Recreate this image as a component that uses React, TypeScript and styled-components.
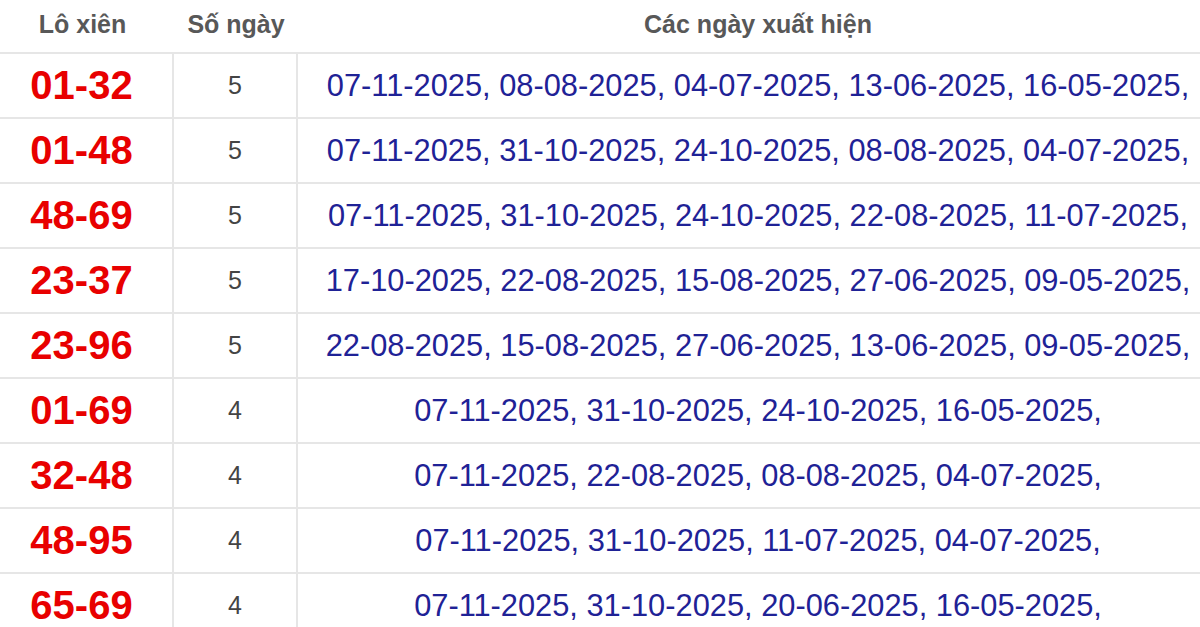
import React from 'react';
import styled, { createGlobalStyle } from 'styled-components';

const GlobalStyle = createGlobalStyle`
  html, body {
    margin: 0;
    padding: 0;
    background: #fff;
    overflow: hidden;
  }
  body {
    font-family: 'Liberation Sans', Arial, sans-serif;
  }
`;

const rows = [
  { pair: '01-32', count: 5, dates: ['07-11-2025', '08-08-2025', '04-07-2025', '13-06-2025', '16-05-2025'] },
  { pair: '01-48', count: 5, dates: ['07-11-2025', '31-10-2025', '24-10-2025', '08-08-2025', '04-07-2025'] },
  { pair: '48-69', count: 5, dates: ['07-11-2025', '31-10-2025', '24-10-2025', '22-08-2025', '11-07-2025'] },
  { pair: '23-37', count: 5, dates: ['17-10-2025', '22-08-2025', '15-08-2025', '27-06-2025', '09-05-2025'] },
  { pair: '23-96', count: 5, dates: ['22-08-2025', '15-08-2025', '27-06-2025', '13-06-2025', '09-05-2025'] },
  { pair: '01-69', count: 4, dates: ['07-11-2025', '31-10-2025', '24-10-2025', '16-05-2025'] },
  { pair: '32-48', count: 4, dates: ['07-11-2025', '22-08-2025', '08-08-2025', '04-07-2025'] },
  { pair: '48-95', count: 4, dates: ['07-11-2025', '31-10-2025', '11-07-2025', '04-07-2025'] },
  { pair: '65-69', count: 4, dates: ['07-11-2025', '31-10-2025', '20-06-2025', '16-05-2025'] },
];

const App = () => {
  return (
    <>
      <GlobalStyle />
      <Table>
        <HeadRow>
          <HeadCell>Lô xiên</HeadCell>
          <HeadCell>Số ngày</HeadCell>
          <HeadCell>Các ngày xuất hiện</HeadCell>
        </HeadRow>
        {rows.map((r) => (
          <BodyRow key={r.pair}>
            <PairCell>{r.pair}</PairCell>
            <CountCell>{r.count}</CountCell>
            <DatesCell>{r.dates.map((d) => `${d}, `).join('').trimEnd()}</DatesCell>
          </BodyRow>
        ))}
      </Table>
    </>
  );
};

// bảng rộng hơn khung nhìn một chút, lệch trái như ảnh gốc
const Table = styled.div`
  width: 1227px;
  margin-left: -9px;
`;

const HeadRow = styled.div`
  display: grid;
  grid-template-columns: 183px 124px 1fr;
  height: 54px;
  box-sizing: border-box;
  border-bottom: 2px solid #e6e6e6;
`;

const HeadCell = styled.div`
  display: flex;
  align-items: center;
  justify-content: center;
  padding-bottom: 4px;
  font-size: 25px;
  font-weight: bold;
  color: #585858;
`;

const BodyRow = styled.div`
  display: grid;
  grid-template-columns: 183px 124px 1fr;
  height: 65px;
  box-sizing: border-box;
  border-bottom: 2px solid #e6e6e6;
`;

const Cell = styled.div`
  display: flex;
  align-items: center;
  justify-content: center;
  white-space: nowrap;
  box-sizing: border-box;
`;

const PairCell = styled(Cell)`
  border-right: 2px solid #e6e6e6;
  font-size: 40px;
  font-weight: bold;
  color: #e80000;
`;

const CountCell = styled(Cell)`
  border-right: 2px solid #e6e6e6;
  font-size: 25px;
  color: #444;
`;

const DatesCell = styled(Cell)`
  font-size: 30.8px;
  color: #1f2296;
`;

export default App;
